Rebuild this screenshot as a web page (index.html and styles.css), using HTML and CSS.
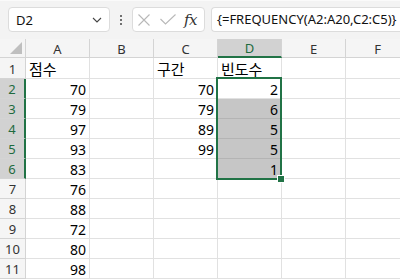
FILE: index.html
```html
<!DOCTYPE html>
<html lang="ko">
<head>
<meta charset="utf-8">
<link rel="stylesheet" href="styles.css">
</head>
<body>
<div class="app">
  <div class="fbar">
    <div class="namebox">
      <span class="ref">D2</span>
      <svg class="chev" width="10" height="6" viewBox="0 0 10 6"><path d="M1 1 L5 5 L9 1" fill="none" stroke="#444" stroke-width="1.1"/></svg>
    </div>
    <div class="dots"><i></i><i></i><i></i></div>
    <div class="fxbox">
      <svg class="ico" width="12" height="12" viewBox="0 0 12 12"><path d="M0.5 0.5 L11.5 11.5 M11.5 0.5 L0.5 11.5" stroke="#b8b8b8" stroke-width="1.1" fill="none"/></svg>
      <svg class="ico" width="16" height="11" viewBox="0 0 16 11"><path d="M0.5 5 L5.5 10 L15.5 0.5" stroke="#b8b8b8" stroke-width="1.1" fill="none"/></svg>
      <span class="fx">fx</span>
    </div>
    <div class="formula">{=FREQUENCY(A2:A20,C2:C5)}</div>
  </div>
  <div class="sheet">
    <div class="grid">
      <div class="h corner"><span class="tri"></span></div>
      <div class="h col">A</div><div class="h col">B</div><div class="h col">C</div><div class="h col sel">D</div><div class="h col">E</div><div class="h col">F</div>

      <div class="h row r1">1</div>
      <div class="c kr">점수</div><div class="c"></div><div class="c kr">구간</div><div class="c kr">빈도수</div><div class="c"></div><div class="c"></div>

      <div class="h row sel">2</div>
      <div class="c n">70</div><div class="c"></div><div class="c n">70</div><div class="c n">2</div><div class="c"></div><div class="c"></div>

      <div class="h row sel">3</div>
      <div class="c n">79</div><div class="c"></div><div class="c n">79</div><div class="c n g">6</div><div class="c"></div><div class="c"></div>

      <div class="h row sel">4</div>
      <div class="c n">97</div><div class="c"></div><div class="c n">89</div><div class="c n g">5</div><div class="c"></div><div class="c"></div>

      <div class="h row sel">5</div>
      <div class="c n">93</div><div class="c"></div><div class="c n">99</div><div class="c n g">5</div><div class="c"></div><div class="c"></div>

      <div class="h row sel">6</div>
      <div class="c n">83</div><div class="c"></div><div class="c n"></div><div class="c n g">1</div><div class="c"></div><div class="c"></div>

      <div class="h row">7</div>
      <div class="c n">76</div><div class="c"></div><div class="c"></div><div class="c"></div><div class="c"></div><div class="c"></div>

      <div class="h row">8</div>
      <div class="c n">88</div><div class="c"></div><div class="c"></div><div class="c"></div><div class="c"></div><div class="c"></div>

      <div class="h row">9</div>
      <div class="c n">72</div><div class="c"></div><div class="c"></div><div class="c"></div><div class="c"></div><div class="c"></div>

      <div class="h row">10</div>
      <div class="c n">80</div><div class="c"></div><div class="c"></div><div class="c"></div><div class="c"></div><div class="c"></div>

      <div class="h row">11</div>
      <div class="c n">98</div><div class="c"></div><div class="c"></div><div class="c"></div><div class="c"></div><div class="c"></div>
    </div>
    <div class="selection"><span class="handle"></span></div>
  </div>
</div>
</body>
</html>
```

FILE: styles.css
```css
* { box-sizing: border-box; }
html, body { margin: 0; padding: 0; background: #fff; overflow: hidden; }
body { width: 400px; height: 279px; font-family: "Noto Sans", "Noto Sans CJK KR", sans-serif; color: #000; }

.app { width: 400px; height: 279px; overflow: hidden; }

.fbar {
  height: 39px;
  background: #f3f3f3;
  border-top: 1px solid #fafafa;
  display: flex;
  align-items: flex-start;
  padding-top: 6px;
  padding-left: 8px;
}
.namebox {
  width: 102px; height: 25px;
  background: #fff;
  border: 1px solid #dcdcdc;
  border-radius: 4px;
  display: flex; align-items: center; justify-content: space-between;
  padding: 0 7px 0 7px;
  font-size: 13px; color: #111;
}
.chev { margin-top: 1px; }
.dots {
  width: 22px; height: 25px;
  display: flex; flex-direction: column; align-items: center; justify-content: center; gap: 2px;
}
.dots i { display: block; width: 2px; height: 2px; background: #444; border-radius: 1px; }
.fxbox {
  width: 73px; height: 25px;
  background: #fff;
  border: 1px solid #dcdcdc;
  border-radius: 4px;
  display: flex; align-items: center;
  padding-left: 5px;
  gap: 10px;
}
.fxbox .ico:nth-child(2) { margin-left: 0; }
.fx {
  font-family: "DejaVu Serif", "Liberation Serif", serif;
  font-style: italic;
  font-size: 15px;
  color: #333;
  margin-left: -2px;
  letter-spacing: -0.5px;
}
.formula {
  margin-left: 6px;
  flex: 1;
  height: 25px;
  background: #fff;
  border: 1px solid #dcdcdc;
  border-right: none;
  border-radius: 4px 0 0 4px;
  font-size: 13px;
  line-height: 23px;
  padding-left: 5px;
  color: #111;
  white-space: nowrap;
}

.sheet { position: relative; }
.grid {
  display: grid;
  grid-template-columns: 26px 64px 64px 64px 64px 64px 64px;
  grid-template-rows: 19px 21px repeat(10, 20px);
  width: 410px;
}
.h {
  background: #f5f5f5;
  color: #333;
  font-size: 13px;
  display: flex; align-items: center; justify-content: center;
  border-right: 1px solid #d4d4d4;
  border-bottom: 1px solid #d4d4d4;
}
.corner { position: relative; }
.tri {
  position: absolute; right: 3px; bottom: 3px;
  width: 0; height: 0;
  border-left: 12px solid transparent;
  border-bottom: 12px solid #bfbfbf;
}
.col { padding-top: 1px; }
.col.sel { background: #d2d2d2; color: #1e6b3e; border-bottom: 2px solid #217346; }
.row { font-size: 13px; padding-top: 1px; }
.row.sel { background: #d2d2d2; color: #1e6b3e; border-right: 2px solid #217346; }
.c {
  border-right: 1px solid #e1e1e1;
  border-bottom: 1px solid #e1e1e1;
  font-size: 14px;
  display: flex; align-items: center;
  padding: 1px 3px 0 4px;
  white-space: nowrap;
}
.c.n { justify-content: flex-end; }
.c.kr { font-family: "Noto Sans CJK KR", sans-serif; font-size: 15px; padding-left: 3px; }
.c.g { background: #c6c6c6; border-bottom-color: #b4b4b4; }

.selection {
  position: absolute;
  left: 216px; top: 38px;
  width: 66px; height: 103px;
  border: 2px solid #217346;
  pointer-events: none;
}
.handle {
  position: absolute;
  right: -4px; bottom: -4px;
  width: 6px; height: 6px;
  background: #217346;
  outline: 1px solid #fff;
}
```
